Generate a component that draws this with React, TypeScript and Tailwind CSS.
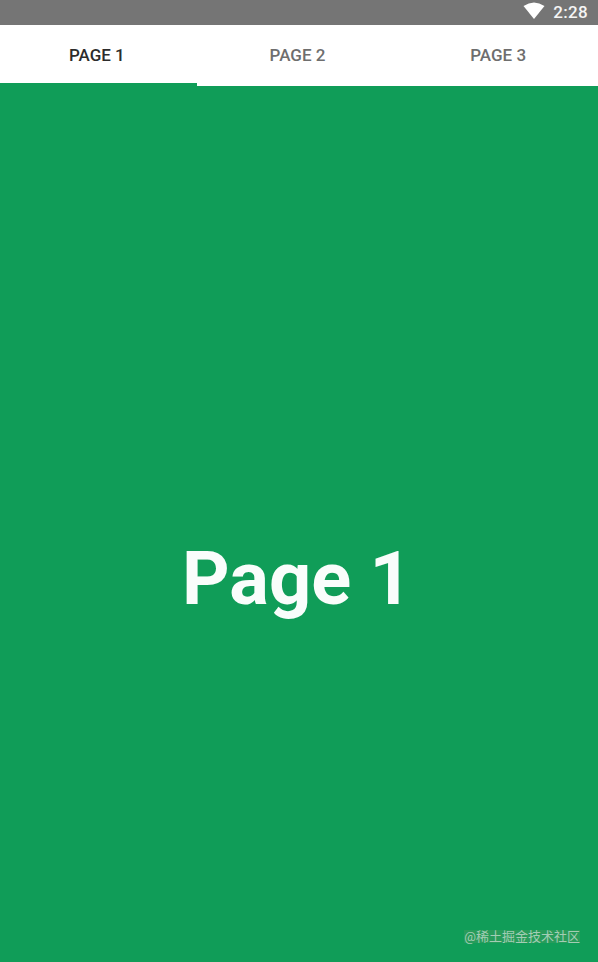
export default function App() {
  const roboto = "font-['Roboto',sans-serif]";
  return (
    <div className={`relative flex h-[962px] w-[598px] flex-col overflow-hidden bg-[#109d58] ${roboto}`}>
      <div className="flex h-[25px] shrink-0 items-center justify-end gap-[8px] bg-[#757575] pr-[10px]">
        <svg width="22" height="17" viewBox="0 0 22 17" className="mt-[-4px]">
          <path d="M0.5 4 Q11 -3 21.5 4 L11 17 Z" fill="#ffffff" />
        </svg>
        <span className="text-[17px] leading-none font-medium tracking-[0.3px] text-[#f5f5f5]">2:28</span>
      </div>
      <div className="relative flex h-[61px] shrink-0 bg-white pt-[3px]">
        <div className="flex h-[55px] flex-1 items-center justify-center pr-[7px] text-[17px] font-medium text-[#2c2c2c]">PAGE 1</div>
        <div className="flex h-[55px] flex-1 items-center justify-center pr-[7px] text-[17px] font-medium text-[#6e6e6e]">PAGE 2</div>
        <div className="flex h-[55px] flex-1 items-center justify-center pr-[3px] text-[17px] font-medium text-[#6e6e6e]">PAGE 3</div>
        <div className="absolute bottom-0 left-0 h-[3px] w-[197px] bg-[#109d58]" />
      </div>
      <div className="flex flex-1 items-center justify-center pt-[110px] pr-[4px]">
        <span className="text-[74px] leading-none font-bold text-[#f9fdfb]">Page 1</span>
      </div>
      <div className="absolute right-[18px] bottom-[19px] bg-[#6f9a62]/25 font-['Roboto','Noto_Sans_CJK_SC',sans-serif] text-[13px] leading-none text-[#a3cdb4]">
        @稀土掘金技术社区
      </div>
    </div>
  );
}
